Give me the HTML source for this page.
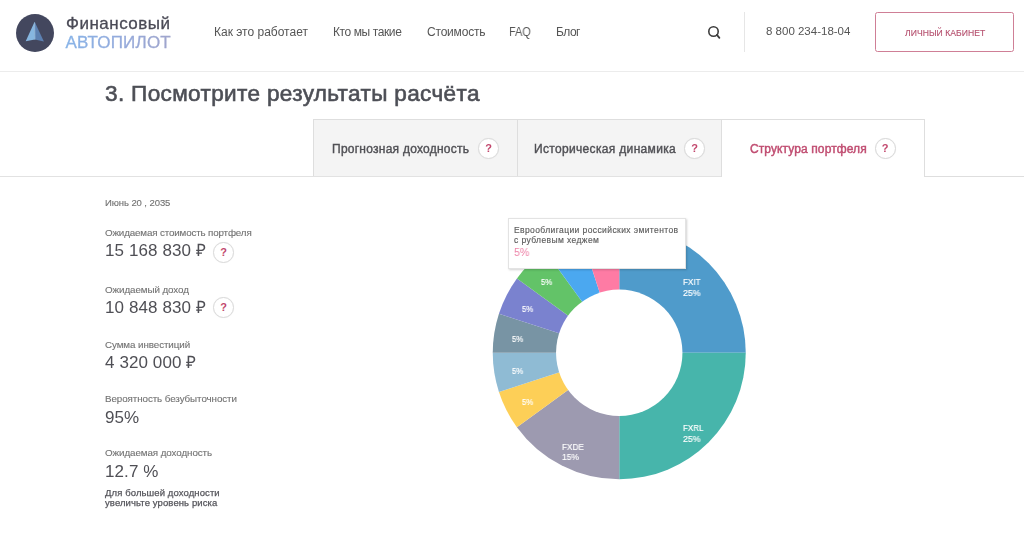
<!DOCTYPE html>
<html><head><meta charset="utf-8">
<style>
*{margin:0;padding:0;box-sizing:border-box}
html,body{width:1024px;height:540px;overflow:hidden;background:#fff;font-family:"Liberation Sans",sans-serif;position:relative;-webkit-font-smoothing:antialiased}
.a{position:absolute;white-space:nowrap;line-height:1;will-change:transform}
.hdr-line{position:absolute;left:0;top:71px;width:1024px;height:1px;background:#ececec}
.logo-c{position:absolute;left:15.7px;top:13.7px;width:38px;height:38px;border-radius:50%;background:#43475e}
.nav{font-size:12px;color:#555;top:26px}
.btn{position:absolute;left:875px;top:12px;width:139px;height:40px;border:1px solid #cf7f96;border-radius:2.5px}
.tab{position:absolute;top:119px;height:57px;background:#f4f4f4;border:1px solid #dedede;border-bottom:none}
.tabt{font-size:12px;color:#505055;top:143px;-webkit-text-stroke:0.4px #505055}
.q{position:absolute;width:21px;height:21px;border-radius:50%;background:#fff;border:1px solid #dadada;box-shadow:0 0 1px rgba(0,0,0,0.08);color:#c2476d;font-size:11px;font-weight:bold;text-align:center;line-height:19.5px}
.lbl{font-size:9.8px;color:#727272;letter-spacing:-0.08px;-webkit-text-stroke:0.12px #727272}
.val{font-size:17px;color:#4f4f55;letter-spacing:0.1px}
.dl{font-size:9px;color:#fff;-webkit-text-stroke:0.15px #fff;transform-origin:0 0}
</style></head><body>
<div class="logo-c"></div>
<svg class="a" style="left:16px;top:13px" width="39" height="39" viewBox="0 0 39 39">
<path d="M18.6 8.7 L9.7 28.2 L18.9 26.6 Z" fill="#86b6e0"/>
<path d="M18.6 8.7 L27.9 28.5 L18.9 26.6 Z" fill="#5c80b1"/>
<path d="M18.6 9.5 L18.9 26.6" stroke="#a6cbea" stroke-width="0.7"/>
</svg>
<div class="a" style="left:65.5px;top:15px;font-size:17px;color:#4a4a56;letter-spacing:0.5px;-webkit-text-stroke:0.3px #4a4a56">Финансовый</div>
<svg class="a" style="left:60px;top:30px" width="120" height="22" viewBox="0 0 120 22"><defs><linearGradient id="lg" x1="0" x2="1" y1="0" y2="0"><stop offset="0" stop-color="#88b4e8"/><stop offset="0.55" stop-color="#95aadb"/><stop offset="1" stop-color="#a0a5cc"/></linearGradient></defs><text x="5.5" y="18" font-family="Liberation Sans" font-size="17" letter-spacing="0.2" fill="url(#lg)" stroke="url(#lg)" stroke-width="0.3">АВТОПИЛОТ</text></svg>
<div class="a nav" style="left:214px">Как это работает</div>
<div class="a nav" style="left:333px;letter-spacing:-0.4px">Кто мы такие</div>
<div class="a nav" style="left:427px;letter-spacing:-0.2px">Стоимость</div>
<div class="a nav" style="left:509.3px;letter-spacing:0;transform:scaleX(0.9);transform-origin:0 0">FAQ</div>
<div class="a nav" style="left:556px;letter-spacing:-0.5px">Блог</div>
<svg class="a" style="left:706px;top:25px" width="16" height="16" viewBox="0 0 16 16">
<circle cx="7.5" cy="6.5" r="4.7" fill="none" stroke="#3d3d3d" stroke-width="1.6"/>
<path d="M10.9 9.9 L13.4 12.8" stroke="#3d3d3d" stroke-width="1.8" stroke-linecap="round"/>
</svg>
<div class="a" style="left:744px;top:12px;width:1px;height:40px;background:#e6e6e6"></div>
<div class="a" style="left:766px;top:26px;font-size:11.5px;color:#555">8 800 234-18-04</div>
<div class="btn"></div>
<div class="a" style="left:905px;top:29.3px;font-size:8.6px;color:#b5506e;letter-spacing:0.05px;-webkit-text-stroke:0.12px #b5506e">ЛИЧНЫЙ КАБИНЕТ</div>
<div class="hdr-line"></div>

<div class="a" style="left:104.5px;top:82.6px;font-size:22.6px;color:#4d4f56;letter-spacing:0.33px;-webkit-text-stroke:0.6px #4d4f56">3. Посмотрите результаты расчёта</div>

<div class="a" style="left:0;top:176px;width:1024px;height:1px;background:#dedede"></div>
<div class="tab" style="left:313px;width:205px"></div>
<div class="tab" style="left:517px;width:205px"></div>
<div class="tab" style="left:721px;width:204px;height:58px;background:#fff"></div>
<div class="a" style="left:0;top:176px;width:721px;height:1px;background:#e2e2e2"></div>
<div class="a tabt" style="left:332px;letter-spacing:0.25px">Прогнозная доходность</div>
<div class="q" style="left:478px;top:137.5px">?</div>
<div class="a tabt" style="left:533.5px;letter-spacing:0.33px">Историческая динамика</div>
<div class="q" style="left:684px;top:137.5px">?</div>
<div class="a tabt" style="left:750px;color:#c04d71;-webkit-text-stroke:0.45px #c04d71;letter-spacing:0.1px">Структура портфеля</div>
<div class="q" style="left:874.5px;top:137.5px;border-color:#d8d8d8">?</div>

<div class="a lbl" style="left:105px;top:198px;font-size:9.5px">Июнь 20 , 2035</div>
<div class="a lbl" style="left:105px;top:227.8px;letter-spacing:-0.15px">Ожидаемая стоимость портфеля</div>
<div class="a val" style="left:105px;top:241.8px">15 168 830 ₽</div>
<div class="q" style="left:213px;top:242px">?</div>
<div class="a lbl" style="left:105px;top:284.8px">Ожидаемый доход</div>
<div class="a val" style="left:105px;top:298.8px">10 848 830 ₽</div>
<div class="q" style="left:213px;top:297px">?</div>
<div class="a lbl" style="left:105px;top:339.8px">Сумма инвестиций</div>
<div class="a val" style="left:105px;top:353.8px">4 320 000 ₽</div>
<div class="a lbl" style="left:105px;top:393.8px">Вероятность безубыточности</div>
<div class="a val" style="left:105px;top:408.8px">95%</div>
<div class="a lbl" style="left:105px;top:447.8px">Ожидаемая доходность</div>
<div class="a val" style="left:105px;top:462.8px">12.7 %</div>
<div class="a" style="left:105px;top:488.3px;font-size:9.5px;color:#55555b;-webkit-text-stroke:0.25px #55555b;letter-spacing:0.1px;line-height:9.6px">Для большей доходности<br>увеличьте уровень риска</div>

<svg class="a" style="left:0;top:0" width="1024" height="540" viewBox="0 0 1024 540">
<path d="M619.25 226.30A126.5 126.5 0 0 1 745.75 352.80L619.25 352.80Z" fill="#4f9bcb"/>
<path d="M745.75 352.80A126.5 126.5 0 0 1 619.25 479.30L619.25 352.80Z" fill="#47b5ab"/>
<path d="M619.25 479.30A126.5 126.5 0 0 1 516.91 427.15L619.25 352.80Z" fill="#9d9ab0"/>
<path d="M516.91 427.15A126.5 126.5 0 0 1 498.94 391.89L619.25 352.80Z" fill="#fdcf57"/>
<path d="M498.94 391.89A126.5 126.5 0 0 1 492.75 352.80L619.25 352.80Z" fill="#8fbbd4"/>
<path d="M492.75 352.80A126.5 126.5 0 0 1 498.94 313.71L619.25 352.80Z" fill="#7894a4"/>
<path d="M498.94 313.71A126.5 126.5 0 0 1 516.91 278.45L619.25 352.80Z" fill="#7a82cf"/>
<path d="M516.91 278.45A126.5 126.5 0 0 1 544.90 250.46L619.25 352.80Z" fill="#63c368"/>
<path d="M544.90 250.46A126.5 126.5 0 0 1 580.16 232.49L619.25 352.80Z" fill="#4ba8f0"/>
<path d="M580.16 232.49A126.5 126.5 0 0 1 619.25 226.30L619.25 352.80Z" fill="#fe7ba4"/>

<circle cx="619.25" cy="352.8" r="63.2" fill="#fff"/>
</svg>
<div class="a dl" style="left:683px;top:277.8px;letter-spacing:0;transform:scaleX(0.9)">FXIT</div>
<div class="a dl" style="left:683px;top:288.9px;letter-spacing:0;transform:scaleX(0.97)">25%</div>
<div class="a dl" style="left:682.5px;top:423.8px;letter-spacing:0;transform:scaleX(0.89)">FXRL</div>
<div class="a dl" style="left:683px;top:434.5px;letter-spacing:0;transform:scaleX(0.97)">25%</div>
<div class="a dl" style="left:561.8px;top:442.6px;letter-spacing:0;transform:scaleX(0.91)">FXDE</div>
<div class="a dl" style="left:562px;top:452.7px;letter-spacing:0;transform:scaleX(0.94)">15%</div>
<div class="a dl" style="left:541px;top:277.7px;letter-spacing:0;transform:scaleX(0.86)">5%</div>
<div class="a dl" style="left:522px;top:304.5px;letter-spacing:0;transform:scaleX(0.86)">5%</div>
<div class="a dl" style="left:512px;top:335.1px;letter-spacing:0;transform:scaleX(0.86)">5%</div>
<div class="a dl" style="left:512px;top:367.2px;letter-spacing:0;transform:scaleX(0.86)">5%</div>
<div class="a dl" style="left:521.5px;top:397.6px;letter-spacing:0;transform:scaleX(0.86)">5%</div>
<div class="a" style="left:508px;top:218px;width:178px;height:51px;background:#fff;border:1px solid #e3e3e3;box-shadow:1px 1px 2px rgba(0,0,0,0.18)"></div>
<div class="a" style="left:514px;top:225px;font-size:8.5px;color:#5c5c5c;letter-spacing:0.4px;line-height:10.3px;-webkit-text-stroke:0.15px #5c5c5c">Еврооблигации российских эмитентов<br>с рублевым хеджем</div>
<div class="a" style="left:513.6px;top:247.4px;font-size:11.8px;color:#ee84a8;letter-spacing:0;transform:scaleX(0.9);transform-origin:0 0">5%</div>
</body></html>
